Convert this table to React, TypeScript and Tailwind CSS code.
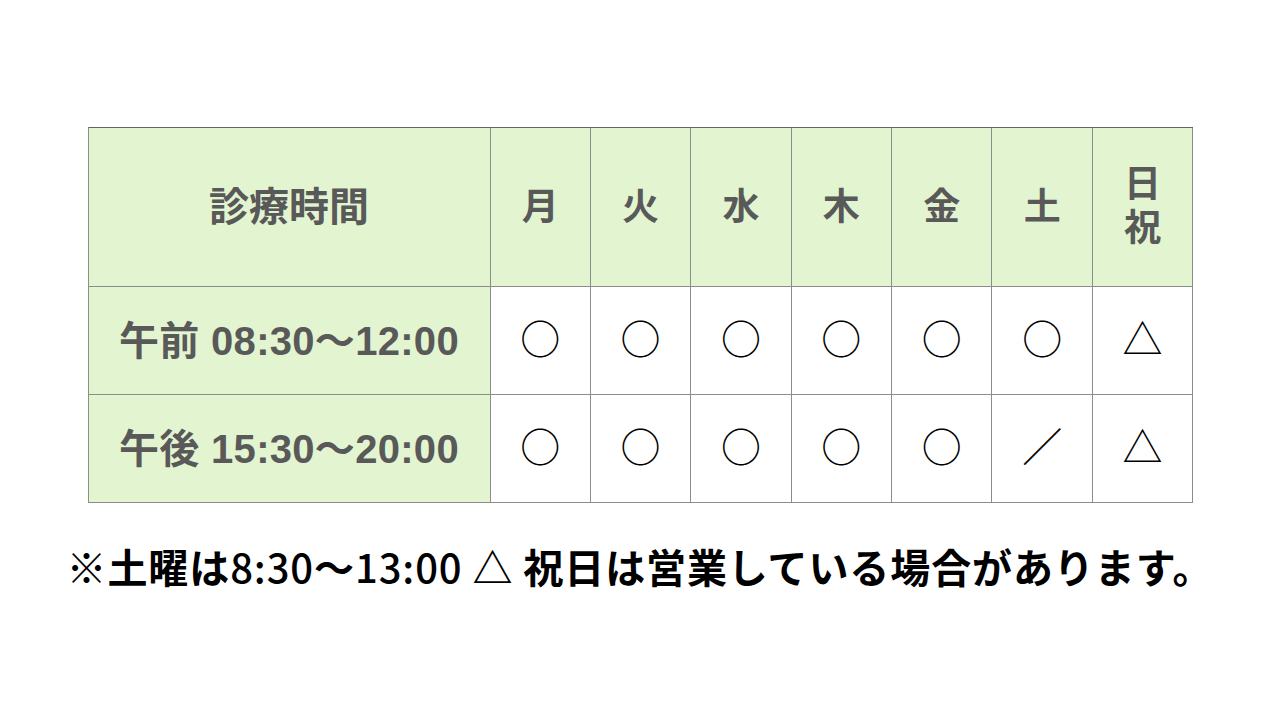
import React from "react";

const days = ["月", "火", "水", "木", "金", "土"];

const rows = [
  { label: "午前", time: "08:30〜12:00", marks: ["○", "○", "○", "○", "○", "○", "△"] },
  { label: "午後", time: "15:30〜20:00", marks: ["○", "○", "○", "○", "○", "／", "△"] },
];

const jp = { fontFamily: '"Liberation Sans", "Noto Sans CJK JP", sans-serif' };
const cjk = { fontFamily: '"Noto Sans CJK JP", sans-serif' };

export default function App() {
  return (
    <div className="min-h-screen w-[1280px] h-[720px] bg-white overflow-hidden" style={jp}>
      <div className="pt-[127px] flex flex-col items-center">
        {/* schedule table */}
        <div className="grid grid-cols-[402px_repeat(7,100.4px)] grid-rows-[159px_108px_108px] w-[1105px] border-t border-l border-t-[#5f6858] border-l-[#8a9286] text-[#595959] font-bold">
          <div className="bg-[#e2f5d0] border-r border-b border-[#8c8c8c] flex items-center justify-center text-[40px] leading-none">
            診療時間
          </div>
          {days.map((d) => (
            <div
              key={d}
              className="bg-[#e2f5d0] border-r border-b border-[#8c8c8c] flex items-center justify-center text-[37px] leading-none"
            >
              {d}
            </div>
          ))}
          <div className="bg-[#e2f5d0] border-r border-b border-[#8c8c8c] flex flex-col items-center justify-center text-[37px] leading-[44px]">
            <span>日</span>
            <span>祝</span>
          </div>

          {rows.map((r) => (
            <React.Fragment key={r.label}>
              <div className="bg-[#e2f5d0] border-r border-b border-[#8c8c8c] flex items-center justify-center text-[40px] leading-none whitespace-pre tracking-[0.3px]">
                {r.label} {r.time}
              </div>
              {r.marks.map((m, i) => (
                <div
                  key={i}
                  className="bg-white border-r border-b border-[#8c8c8c] flex items-center justify-center pb-[7px] text-[40px] leading-none font-normal text-black"
                  style={cjk}
                >
                  {m}
                </div>
              ))}
            </React.Fragment>
          ))}
        </div>

        <p
          className="mt-[43px] text-[40px] leading-none font-bold text-black whitespace-pre tracking-[0.9px]"
          style={cjk}
        >
          ※土曜は<span className="font-medium">8:30</span>〜<span className="font-medium">13:00 </span>△ 祝日は営業している場合があります。
        </p>
      </div>
    </div>
  );
}
